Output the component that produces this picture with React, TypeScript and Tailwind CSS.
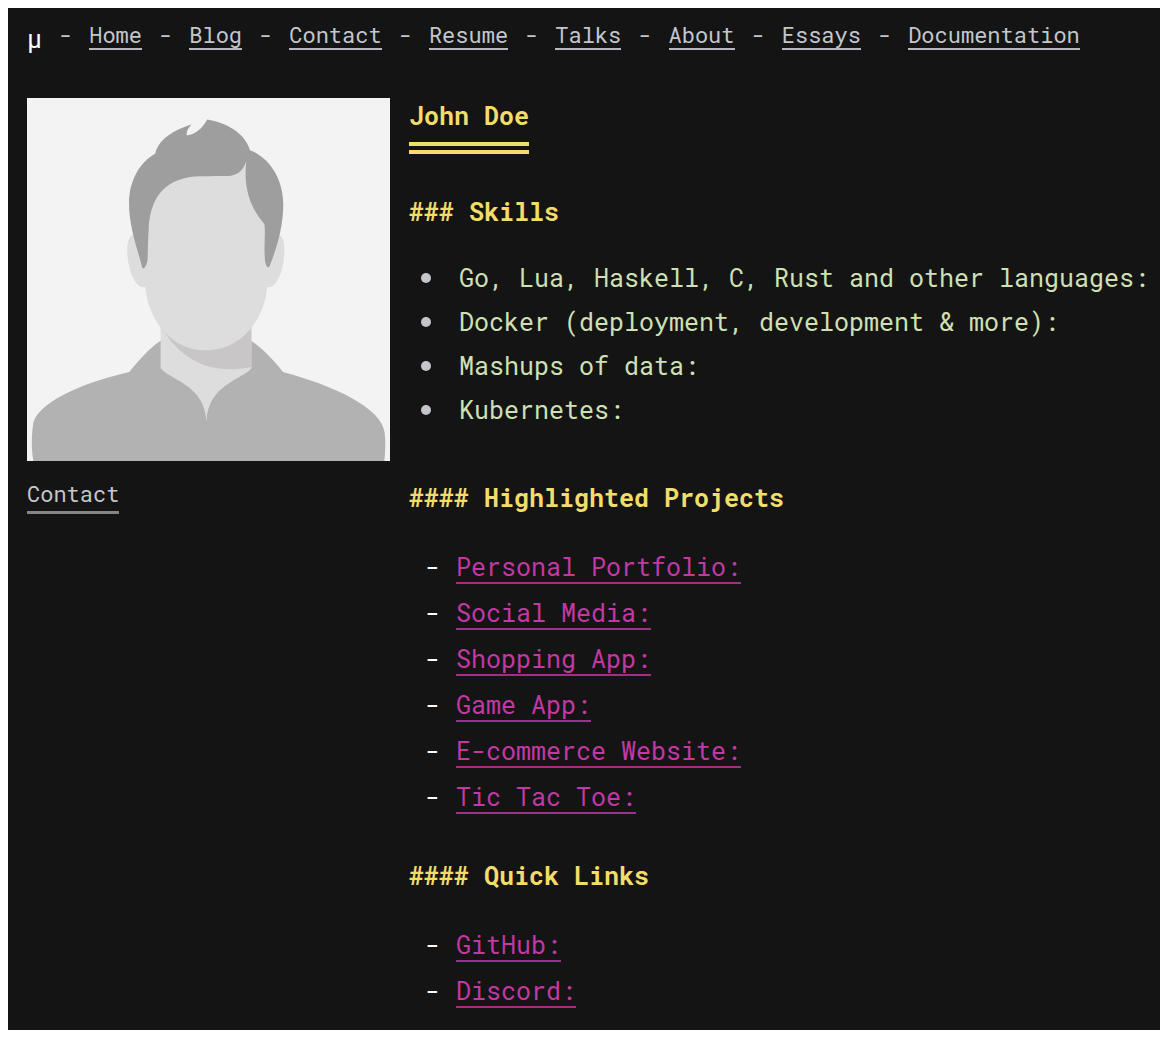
const navLinks = ["Home", "Blog", "Contact", "Resume", "Talks", "About", "Essays", "Documentation"];

const skills = [
  "Go, Lua, Haskell, C, Rust and other languages:",
  "Docker (deployment, development & more):",
  "Mashups of data:",
  "Kubernetes:",
];

const projects = [
  "Personal Portfolio:",
  "Social Media:",
  "Shopping App:",
  "Game App:",
  "E-commerce Website:",
  "Tic Tac Toe:",
];

const quickLinks = ["GitHub:", "Discord:"];

function Avatar() {
  return (
    <svg viewBox="20 23 1092 1092" className="block w-full" role="img" aria-label="Portrait">
      <rect x="20" y="23" width="1092" height="1092" fill="#f3f3f3" />
      <path
        d="M39 1115C32 1075 34 1035 39 1000C52 945 165 884 328 847C357 812 386 777 421 754H695C730 777 762 812 790 847C940 887 1088 954 1096 1030C1099 1058 1098 1085 1095 1115Z"
        fill="#b2b2b2"
      />
      <path
        d="M422 700H695V836C672 868 562 885 560 998C555 885 455 875 422 836Z"
        fill="#dddddd"
      />
      <path d="M424 712C470 790 550 862 695 832V705Z" fill="#c8c6c6" />
      <path
        d="M342 432C322 440 319 470 323 505C329 550 347 597 376 592C382 672 440 782 558 782C676 782 738 672 742 592C770 597 788 550 793 505C796 470 795 440 775 432L690 200H400Z"
        fill="#dddddd"
      />
      <path
        d="M367 534C352 475 327 410 327 340C327 275 356 219 406 190C415 148 462 119 515 103C505 113 498 125 501 136C527 132 548 115 562 88C620 98 675 128 691 180C752 205 791 268 791 345C790 415 771 475 749 531C743 537 735 523 735 495C733 460 738 425 734 402C703 365 668 310 680 212C672 238 655 258 622 258C572 259 530 257 500 263C420 279 388 342 386 420C383 460 384 500 382 515C377 532 371 539 367 534Z"
        fill="#9e9e9e"
      />
    </svg>
  );
}

function LinkList({ items }: { items: string[] }) {
  return (
    <ul className="mt-9 flex flex-col gap-[14px] pl-4">
      {items.map((item) => (
        <li key={item} className="flex gap-4 leading-[30px]">
          <span className="text-white">-</span>
          <a href="#" className="border-b-2 border-[#a02f87] text-[#c238a4]">
            {item}
          </a>
        </li>
      ))}
    </ul>
  );
}

export default function App() {
  return (
    <div className="min-h-screen bg-white p-2">
      <div className="min-h-[calc(100vh-16px)] bg-[#141414] px-[19px] pb-4 font-['Roboto_Mono','DejaVu_Sans_Mono',monospace] text-[25px] text-[#c3c7cd]">
        <nav className="flex flex-wrap gap-x-[17px] pt-4 text-[22px] leading-[22px]">
          <a href="#" className="mt-1 text-[25px] text-white">
            μ
          </a>
          {navLinks.map((label) => (
            <span key={label} className="flex gap-[17px]">
              <span>-</span>
              <a href="#" className="border-b-2 border-[#b5b8be]">
                {label}
              </a>
            </span>
          ))}
        </nav>

        <div className="mt-12 flex gap-[19px]">
          <aside className="w-1/3 max-w-[363px] shrink-0">
            <Avatar />
            <a href="#" className="mt-5 inline-block border-b-[3px] border-[#858585] pb-1 text-[22px] leading-[26px]">
              Contact
            </a>
          </aside>

          <main className="min-w-0 flex-1">
            <h1 className="w-fit border-b-12 border-double border-[#f2dc6b] pb-2 leading-9 font-bold text-[#f2dc6b]">
              John Doe
            </h1>

            <h2 className="mt-10 leading-9 font-bold text-[#f2dc6b]">### Skills</h2>
            <ul className="mt-[26px] text-[#cfe0b4]">
              {skills.map((skill) => (
                <li key={skill} className="flex items-center leading-11 whitespace-nowrap">
                  <span className="mr-7 ml-3 size-[10px] shrink-0 rounded-full bg-[#c3c7cd]" />
                  {skill}
                </li>
              ))}
            </ul>

            <h2 className="mt-12 leading-9 font-bold text-[#f2dc6b]">#### Highlighted Projects</h2>
            <LinkList items={projects} />

            <h2 className="mt-11 leading-9 font-bold text-[#f2dc6b]">#### Quick Links</h2>
            <LinkList items={quickLinks} />
          </main>
        </div>
      </div>
    </div>
  );
}
